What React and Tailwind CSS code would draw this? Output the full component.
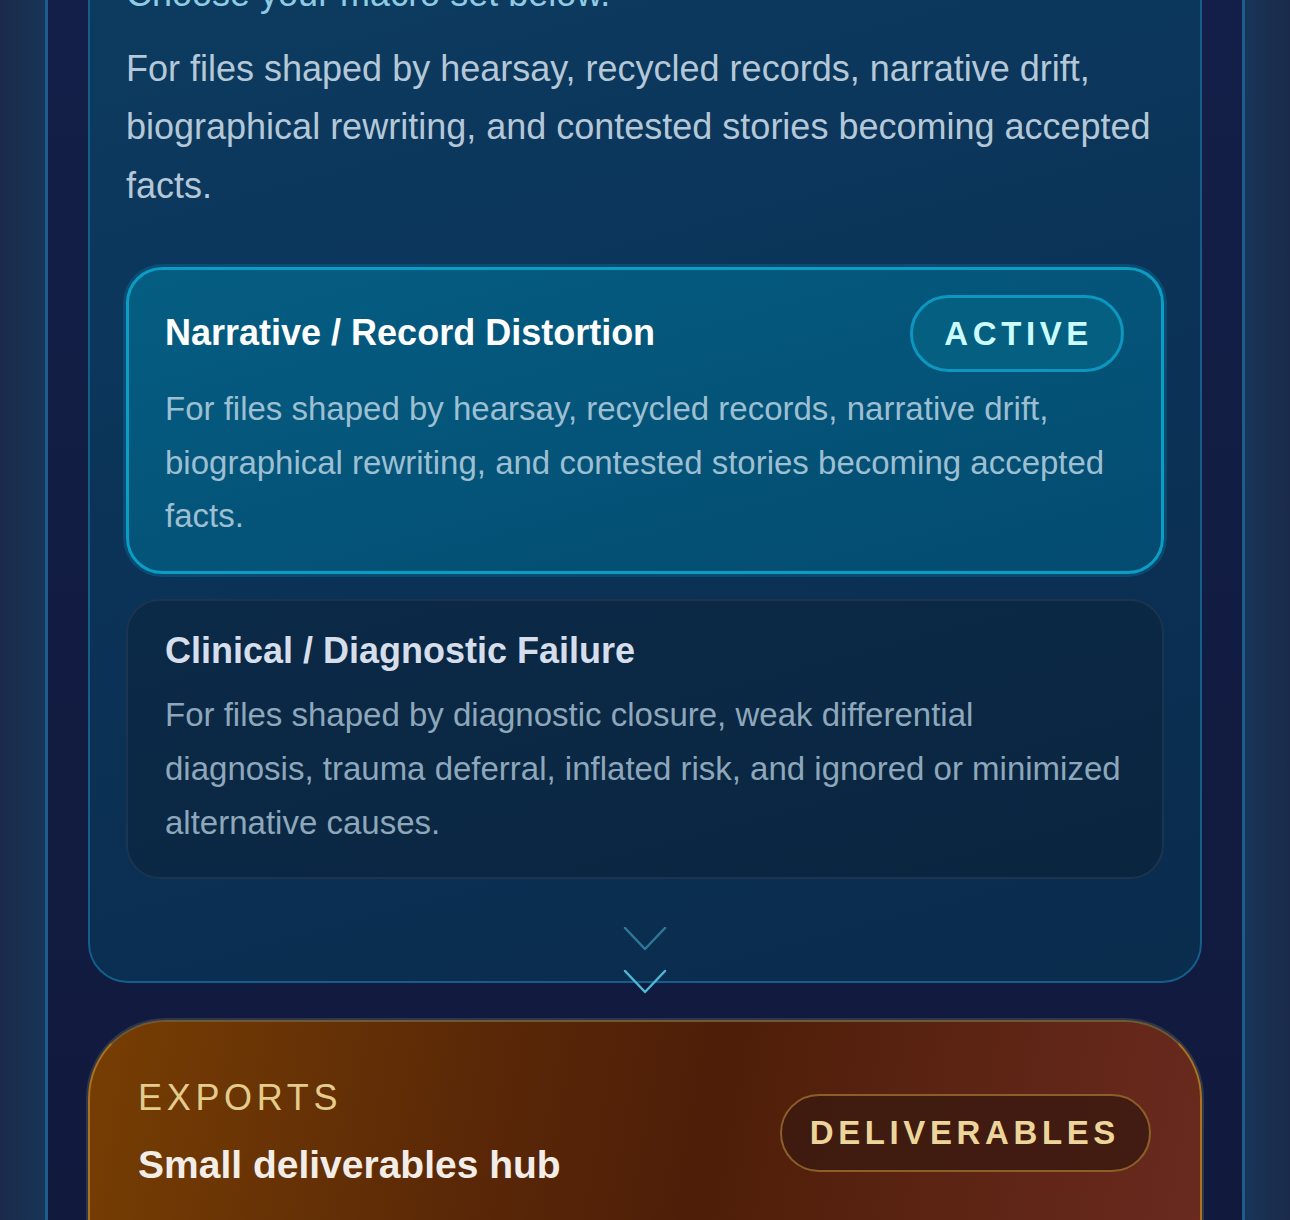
import { ChevronDown } from 'lucide-react';

const macros = [
  {
    title: 'Narrative / Record Distortion',
    desc: 'For files shaped by hearsay, recycled records, narrative drift, biographical rewriting, and contested stories becoming accepted facts.',
    active: true,
  },
  {
    title: 'Clinical / Diagnostic Failure',
    desc: 'For files shaped by diagnostic closure, weak differential diagnosis, trauma deferral, inflated risk, and ignored or minimized alternative causes.',
    active: false,
  },
];

function MacroCard({ m }) {
  if (m.active) {
    return (
      <div className="rounded-[36px] border-[3px] border-[#0c9dc4] bg-[linear-gradient(165deg,#055d82_0%,#044b70_100%)] pl-[36px] pr-[37px] pt-[25px] pb-[28px] shadow-[0_0_0_3px_rgba(10,95,135,0.55)]">
        <div className="flex items-center justify-between">
          <h3 className="text-[36px] font-bold leading-[1.4] text-white">{m.title}</h3>
          <span className="flex h-[77px] items-center rounded-full border-[3px] border-[#0b97bf] bg-[#045f80] pl-[31px] pr-[28px] text-[33px] font-bold tracking-[0.14em] text-[#c9fbff]">
            ACTIVE
          </span>
        </div>
        <p className="mt-[10px] text-[33px] leading-[1.625] text-[#9dbfd2]">{m.desc}</p>
      </div>
    );
  }
  return (
    <div className="rounded-[34px] border-2 border-[#1b3550] bg-[linear-gradient(165deg,#0b2a47_0%,#0a2540_100%)] pl-[37px] pr-[37px] pt-[25px] pb-[28px]">
      <h3 className="text-[36px] font-bold leading-[1.4] text-[#d5deea]">{m.title}</h3>
      <p className="mt-[12px] text-[33px] leading-[1.625] text-[#8ea7bb]">{m.desc}</p>
    </div>
  );
}

export default function App() {
  return (
    <div className="h-[1220px] w-full overflow-hidden bg-[linear-gradient(90deg,#1b2a4a_0%,#183558_3.5%,#121d44_4%,#121d44_96%,#183558_96.5%,#1b2a4a_100%)] font-['Liberation_Sans',Arial,sans-serif]">
      <div className="mx-[45px] flow-root h-full border-x-[3px] border-[#1b5d8d] bg-[linear-gradient(180deg,#131f48_0%,#111a3d_100%)] px-[40px]">
        {/* Macro set panel */}
        <div className="relative -mt-[73px] rounded-[40px] border-2 border-[#135f8a] bg-[linear-gradient(165deg,#0d3c61_0%,#0b3257_50%,#0a2c4d_100%)] px-[36px] pt-[36px] pb-[102px]">
          <p className="text-[36px] leading-[1.625] text-[#8fcbe2]">Choose your macro set below.</p>
          <p className="mt-4 text-[36px] leading-[1.625] text-[#b5c8d8]">
            For files shaped by hearsay, recycled records, narrative drift, biographical rewriting, and contested stories becoming accepted facts.
          </p>

          <div className="mt-[52px] flex flex-col gap-[25px]">
            {macros.map((m) => (
              <MacroCard key={m.title} m={m} />
            ))}
          </div>

          <svg
            className="absolute -bottom-[13px] left-1/2 h-[67px] w-[46px] -translate-x-1/2"
            viewBox="0 0 46 67"
            fill="none"
            strokeWidth="2.5"
            strokeLinecap="round"
            strokeLinejoin="round"
          >
            <path d="M3 1 L23 22 L43 1" stroke="#2d7896" />
            <path d="M3 44 L23 65 L43 44" stroke="#4cb8d4" />
          </svg>
        </div>

        {/* Exports */}
        <div className="mt-[37px] flex items-center justify-between rounded-t-[78px] border-2 border-x-[#a8741f] border-t-[#6a5a38] border-b-transparent bg-[linear-gradient(100deg,#773e03_0%,#5a2807_35%,#4e1e08_55%,#6a2a1f_100%)] pl-[48px] pr-[49px] pt-[53px] pb-[60px] shadow-[0_0_0_2px_rgba(60,66,80,0.7)]">
          <div>
            <p className="text-[36px] leading-[1.3] tracking-[0.13em] text-[#e3cc8c]">EXPORTS</p>
            <h2 className="mt-[18px] text-[39px] font-bold leading-[1.3] text-[#f3ede8]">Small deliverables hub</h2>
          </div>
          <span className="flex h-[78px] items-center rounded-full border-2 border-[#8b5f28] bg-[#3c1a11]/85 pl-[28px] pr-[29px] text-[33px] font-bold tracking-[0.14em] text-[#ecd59b]">
            DELIVERABLES
          </span>
        </div>
      </div>
    </div>
  );
}
